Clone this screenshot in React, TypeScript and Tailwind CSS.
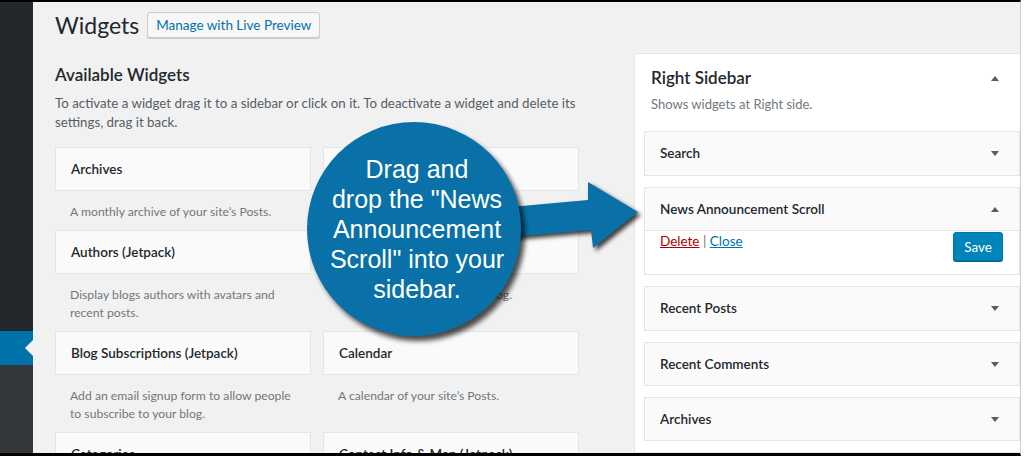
import React from "react";

function Caret({ up = false }: { up?: boolean }) {
  return (
    <svg width="8" height="5" viewBox="0 0 8 5" className="shrink-0">
      {up ? (
        <polygon points="0,5 8,5 4,0" fill="#555d66" />
      ) : (
        <polygon points="0,0 8,0 4,5" fill="#555d66" />
      )}
    </svg>
  );
}

type W = { title: string; desc: React.ReactNode };

const rows: [W, W][] = [
  [
    { title: "Archives", desc: "A monthly archive of your site\u2019s Posts." },
    { title: "Audio", desc: "Displays an audio player." },
  ],
  [
    {
      title: "Authors (Jetpack)",
      desc: (
        <>
          Display blogs authors with avatars and
          <br />
          recent posts.
        </>
      ),
    },
    { title: "Blog Stats (Jetpack)", desc: "Show a hit counter for your blog." },
  ],
  [
    {
      title: "Blog Subscriptions (Jetpack)",
      desc: (
        <>
          Add an email signup form to allow people
          <br />
          to subscribe to your blog.
        </>
      ),
    },
    { title: "Calendar", desc: "A calendar of your site\u2019s Posts." },
  ],
  [
    { title: "Categories", desc: "A list or dropdown of categories." },
    { title: "Contact Info & Map (Jetpack)", desc: "Display a map with your location." },
  ],
];

function WidgetCard({ w }: { w: W }) {
  return (
    <div>
      <div className="h-[44px] border border-[#e5e5e5] bg-[#fafafa] flex items-center pl-[15px] text-[13.5px] font-semibold text-[#23282d] whitespace-nowrap">
        {w.title}
      </div>
      <div className="pt-[12px] pb-[9px] px-[15px] text-[12.2px] leading-[18px] text-[#72777c] whitespace-nowrap">{w.desc}</div>
    </div>
  );
}

function SideItem({ title, h }: { title: string; h: "45" | "44" }) {
  return (
    <div
      className={`${h === "45" ? "h-[45px]" : "h-[44px]"} border border-[#e5e5e5] bg-[#fafafa] flex items-center justify-between pl-[15px] pr-[20px] text-[13.5px] font-semibold text-[#23282d] shrink-0`}
    >
      <span>{title}</span>
      <Caret />
    </div>
  );
}

export default function App() {
  return (
    <div className="w-[1024px] h-[456px] bg-white overflow-hidden relative font-['Lato',sans-serif]">
      <div className="w-[1021px] h-[456px] border-t-2 border-b-[3px] border-black border-r border-r-[#cfcfcf] bg-[#f1f1f1] flex overflow-hidden">
        {/* admin menu */}
        <div className="w-[33px] shrink-0 flex flex-col">
          <div className="h-[329px] bg-[#23282d]" />
          <div className="h-[34px] bg-[#0073aa] relative">
            <div className="absolute right-0 top-[9px] w-0 h-0 border-y-[8px] border-y-transparent border-r-[8px] border-r-[#f1f1f1]" />
          </div>
          <div className="flex-1 bg-[#32373c]" />
        </div>

        {/* main */}
        <div className="flex-1 min-w-0 pl-[22px] pt-[10px] flex flex-col">
          <div className="flex items-center h-[26px]">
            <h1 className="text-[23px] leading-[26px] text-[#23282d]">Widgets</h1>
            <button className="ml-[8px] h-[26px] px-[8px] rounded-[3px] border border-[#cccccc] bg-[#f7f7f7] shadow-[0_1px_0_#cccccc] text-[13.5px] text-[#0073aa] leading-[24px] whitespace-nowrap">
              Manage with Live Preview
            </button>
          </div>

          <div className="flex mt-[15px] flex-1 min-h-0">
            {/* available widgets */}
            <div className="w-[524px] shrink-0 pt-[12px]">
              <h2 className="text-[17px] leading-[20px] font-semibold text-[#23282d]">Available Widgets</h2>
              <p className="mt-[9px] text-[13.3px] leading-[19px] text-[#555d66] whitespace-nowrap">
                To activate a widget drag it to a sidebar or click on it. To deactivate a widget and delete its
                <br />
                settings, drag it back.
              </p>
              <div className="mt-[15px] grid grid-cols-[256px_256px] gap-x-[12px]">
                {rows.map(([a, b], i) => (
                  <React.Fragment key={i}>
                    <WidgetCard w={a} />
                    <WidgetCard w={b} />
                  </React.Fragment>
                ))}
              </div>
            </div>

            {/* right sidebar */}
            <div className="ml-[55px] flex-1 min-w-0 bg-white border border-[#e5e5e5] border-r-0 pt-[14px] pl-[9px]">
              <div className="flex items-center justify-between pl-[7px] pr-[21px] h-[20px]">
                <span className="text-[17px] leading-[20px] font-semibold text-[#23282d]">Right Sidebar</span>
                <Caret up />
              </div>
              <div className="mt-[7px] pl-[7px] text-[13px] leading-[19px] text-[#72777c]">Shows widgets at Right side.</div>
              <div className="mt-[17px] flex flex-col">
                <SideItem title="Search" h="45" />
                <div className="mt-[11px] border border-[#e5e5e5] bg-white shrink-0">
                  <div className="h-[43px] bg-[#fafafa] border-b border-[#e5e5e5] flex items-center justify-between pl-[15px] pr-[20px] text-[13.5px] font-semibold text-[#23282d]">
                    <span>News Announcement Scroll</span>
                    <Caret up />
                  </div>
                  <div className="h-[43px] flex justify-between pl-[15px] pr-[16px] pt-px text-[13.5px] leading-[18px]">
                    <div>
                      <a className="text-[#a00] underline">Delete</a>
                      <span className="text-[#72777c]"> | </span>
                      <a className="text-[#0073aa] underline">Close</a>
                    </div>
                    <button className="h-[29px] px-[10px] rounded-[3px] bg-[#0085ba] border border-[#0073aa] shadow-[0_1px_0_#006799] text-white text-[13.5px]">
                      Save
                    </button>
                  </div>
                </div>
                <div className="mt-[11px]">
                  <SideItem title="Recent Posts" h="45" />
                </div>
                <div className="mt-[11px]">
                  <SideItem title="Recent Comments" h="44" />
                </div>
                <div className="mt-[11px]">
                  <SideItem title="Archives" h="44" />
                </div>
                <div className="mt-[11px]">
                  <SideItem title="Categories" h="44" />
                </div>
              </div>
            </div>
          </div>
        </div>
      </div>

      {/* callout arrow */}
      <svg className="absolute left-0 top-0 pointer-events-none drop-shadow-[3px_3px_2px_rgba(0,0,0,0.75)]" width="1024" height="456" viewBox="0 0 1024 456">
        <polygon points="500,208 588,200 588,182 638,212 593,248 591,230 500,238" fill="#0a71a8" />
      </svg>

      {/* callout circle */}
      <div className="absolute left-[307px] top-[122px] w-[214px] h-[214px] rounded-full bg-[#0a71a8] shadow-[4px_5px_5px_rgba(0,0,0,0.7)] flex items-center justify-center pl-[6px]">
        <div className="text-white text-center text-[25px] leading-[30px] font-['Liberation_Sans',Arial,sans-serif]">
          Drag and
          <br />
          drop the "News
          <br />
          Announcement
          <br />
          Scroll" into your
          <br />
          sidebar.
        </div>
      </div>
    </div>
  );
}
